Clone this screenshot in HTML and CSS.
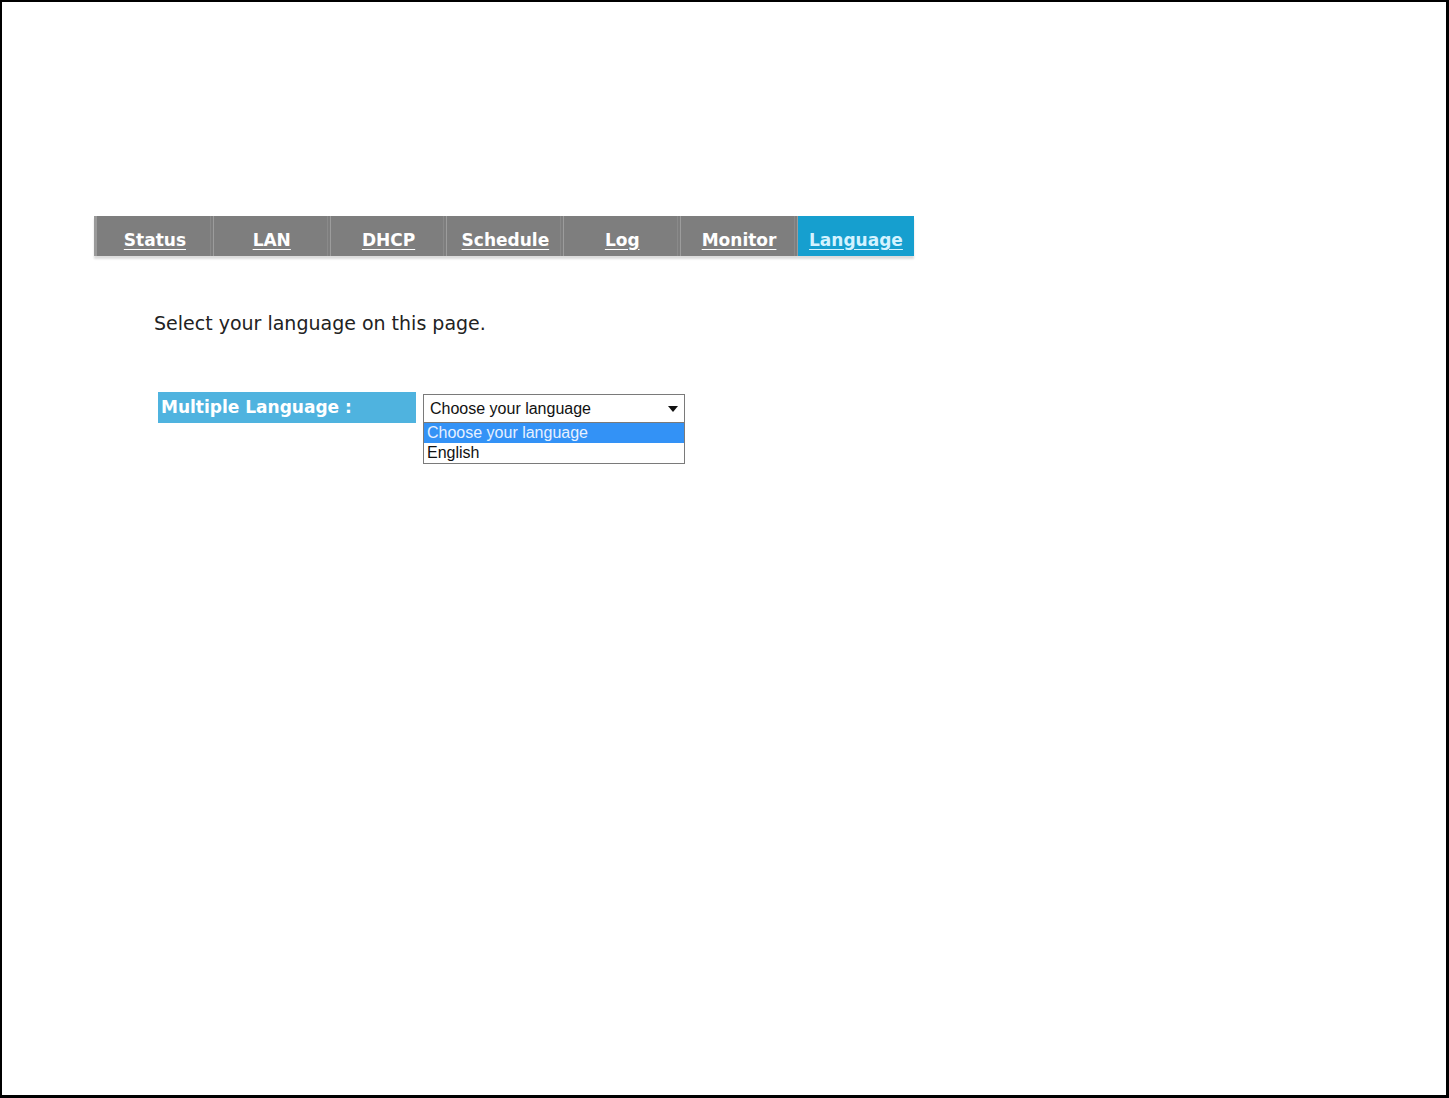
FILE: index.html
```html
<!DOCTYPE html>
<html>
<head>
    <link rel="stylesheet" href="styles.css">
</head>
<body>
    <div class="frame">
        <div class="tabs">
            <a class="tab" href="#">Status</a>
            <a class="tab" href="#">LAN</a>
            <a class="tab" href="#">DHCP</a>
            <a class="tab" href="#">Schedule</a>
            <a class="tab" href="#">Log</a>
            <a class="tab" href="#">Monitor</a>
            <a class="tab active" href="#">Language</a>
        </div>

        <p class="intro">Select your language on this page.</p>

        <div class="row">
            <div class="label">Multiple Language :</div>
            <div class="picker">
                <div class="select">
                    <span>Choose your language</span>
                    <span class="arrow"></span>
                </div>
                <div class="options">
                    <div class="option selected">Choose your language</div>
                    <div class="option">English</div>
                </div>
            </div>
        </div>
    </div>
</body>
</html>
```

FILE: styles.css
```css
body {
    margin: 0;
    padding: 0;
    background: #fff;
}

.frame {
    box-sizing: border-box;
    width: 1449px;
    height: 1098px;
    border: 2px solid #000;
    border-right-width: 3px;
    border-bottom-width: 3px;
    padding: 214px 0 0 92px;
}

.tabs {
    display: flex;
    width: 820px;
    height: 40px;
    background: #7e7e7e;
    box-shadow: 0 3px 2px #dcdcdc;
    border-left: 3px solid #9a9a9a;
    box-sizing: border-box;
}

.tab {
    flex: 1;
    display: flex;
    align-items: center;
    justify-content: center;
    padding-top: 7px;
    box-sizing: border-box;
    font-family: "DejaVu Sans", Verdana, sans-serif;
    font-weight: bold;
    font-size: 17px;
    color: #fff;
    text-decoration: underline;
    text-underline-offset: 3px;
    border-right: 1px solid #9c9c9c;
    box-shadow: inset -2px 0 0 #7e7e7e, inset -3px 0 0 #8a8a8a;
}

.tab:last-child {
    border-right: none;
    box-shadow: none;
}

.tab.active {
    background: #169fcf;
    color: #d4f3ff;
    flex: 0 0 116px;
}

.intro {
    margin: 56px 0 0 60px;
    font-family: "DejaVu Sans", Verdana, sans-serif;
    font-size: 19px;
    color: #222;
}

.row {
    display: flex;
    align-items: flex-start;
    margin: 60px 0 0 64px;
}

.label {
    width: 255px;
    height: 31px;
    padding-left: 3px;
    background: #4fb3df;
    color: #fff;
    font-family: "DejaVu Sans", Verdana, sans-serif;
    font-weight: bold;
    font-size: 17px;
    line-height: 31px;
    margin-top: -2px;
}

.picker {
    margin-left: 7px;
    width: 262px;
    font-family: "Liberation Sans", Arial, sans-serif;
    font-size: 16px;
    color: #111;
}

.select {
    box-sizing: border-box;
    height: 29px;
    border: 1px solid #7a7a7a;
    display: flex;
    align-items: center;
    justify-content: space-between;
    padding: 0 6px 0 6px;
    background: #fff;
}

.arrow {
    width: 0;
    height: 0;
    border-left: 5px solid transparent;
    border-right: 5px solid transparent;
    border-top: 6px solid #111;
}

.options {
    box-sizing: border-box;
    border: 1px solid #7a7a7a;
    border-top: none;
}

.option {
    height: 20px;
    line-height: 20px;
    padding-left: 3px;
}

.option.selected {
    background: #3392f6;
    color: #e6f0ff;
}
```
